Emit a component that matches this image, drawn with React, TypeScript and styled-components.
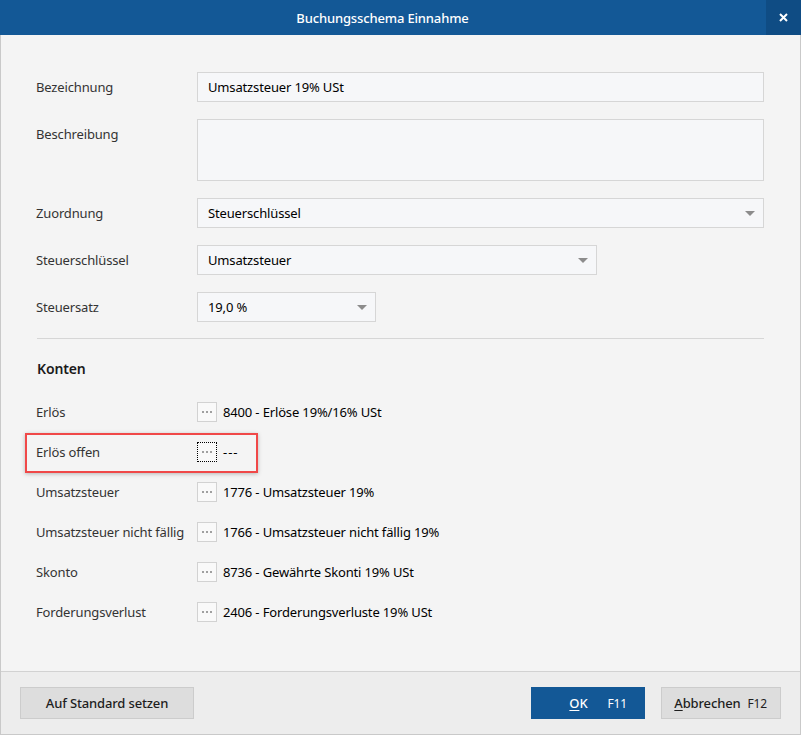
import React, { FC } from 'react';
import styled, { createGlobalStyle } from 'styled-components';

const GlobalStyle = createGlobalStyle`
  html, body {
    margin: 0;
    padding: 0;
    background: #ffffff;
  }
  body {
    font-family: 'Noto Sans', 'Open Sans', sans-serif;
    font-size: 13px;
    letter-spacing: -0.15px;
  }
`;

const Window = styled.div`
  width: 801px;
  height: 735px;
  display: flex;
  flex-direction: column;
  box-sizing: border-box;
  background: #f4f4f4;
`;

const TitleBar = styled.div`
  height: 35px;
  flex: 0 0 35px;
  background: #135896;
  display: flex;
  align-items: center;
  justify-content: center;
  position: relative;
`;

const Title = styled.div`
  color: #ffffff;
  font-size: 13px;
  font-weight: 500;
  margin-left: -36px;
`;

const CloseButton = styled.div`
  position: absolute;
  right: 0;
  top: 0;
  width: 35px;
  height: 35px;
  background: #0f4c84;
  display: flex;
  align-items: center;
  justify-content: center;
`;

const Frame = styled.div`
  flex: 1;
  display: flex;
  flex-direction: column;
  border-left: 1px solid #c9c9c9;
  border-right: 1px solid #c9c9c9;
  border-bottom: 1px solid #c9c9c9;
`;

const Body = styled.div`
  flex: 1;
  padding: 37px 36px 0 35px;
`;

const FormGrid = styled.div`
  display: grid;
  grid-template-columns: 161px 1fr;
  row-gap: 17px;
  align-items: start;
`;

const Label = styled.div`
  color: #333333;
  line-height: 30px;
  white-space: nowrap;
`;

const Field = styled.div<{ $width?: number; $height?: number }>`
  position: relative;
  box-sizing: border-box;
  width: ${p => (p.$width ? `${p.$width}px` : '100%')};
  height: ${p => p.$height ?? 30}px;
  border: 1px solid #d6d6d6;
  background: #f6f7f9;
  color: #000000;
  padding: 0 10px;
  line-height: 28px;
`;

const Caret = styled.span`
  position: absolute;
  right: 8px;
  top: 12px;
  width: 0;
  height: 0;
  border-left: 5px solid transparent;
  border-right: 5px solid transparent;
  border-top: 5px solid #8c8c8c;
`;

const Separator = styled.hr`
  border: none;
  height: 1px;
  background: #d6d6d6;
  margin: 16px 0 0 1px;
`;

const SectionTitle = styled.h3`
  margin: 20px 0 13px 1px;
  font-size: 14px;
  font-weight: 600;
  line-height: 20px;
  color: #1a1a1a;
`;

const AccountList = styled.div`
  display: flex;
  flex-direction: column;
`;

const AccountRow = styled.div`
  position: relative;
  display: grid;
  grid-template-columns: 161px 20px 1fr;
  align-items: center;
  height: 40px;
`;

const AccountLabel = styled.div`
  color: #333333;
  white-space: nowrap;
`;

const DotsButton = styled.div<{ $focused?: boolean }>`
  box-sizing: border-box;
  width: 20px;
  height: 20px;
  background: #f9f9f9;
  border: 1px ${p => (p.$focused ? 'dotted #000000' : 'solid #d2d2d2')};
  display: flex;
  align-items: center;
  justify-content: center;
`;

const AccountValue = styled.div<{ $empty?: boolean }>`
  color: #000000;
  white-space: nowrap;
  padding-left: 6px;
  letter-spacing: ${p => (p.$empty ? '1px' : 'inherit')};
`;

const Highlight = styled.div`
  position: absolute;
  left: -11px;
  top: 1px;
  width: 233px;
  height: 40px;
  box-sizing: border-box;
  border: 2px solid #f04848;
  box-shadow: 0 1px 4px rgba(0, 0, 0, 0.25);
  pointer-events: none;
`;

const Footer = styled.div`
  flex: 0 0 63px;
  box-sizing: border-box;
  border-top: 1px solid #d2d2d2;
  background: #ededed;
  display: flex;
  align-items: flex-start;
  padding: 15px 19px 0 19px;
`;

const Spacer = styled.div`
  flex: 1;
`;

const Button = styled.div<{ $primary?: boolean; $width: number; $align?: string; $pad?: number }>`
  box-sizing: border-box;
  width: ${p => p.$width}px;
  height: 32px;
  display: flex;
  align-items: center;
  justify-content: ${p => p.$align ?? 'center'};
  padding-right: ${p => p.$pad ?? 0}px;
  background: ${p => (p.$primary ? '#135896' : '#dddddd')};
  border: 1px solid ${p => (p.$primary ? '#135896' : '#cccccc')};
  color: ${p => (p.$primary ? '#ffffff' : '#1e1e1e')};
  font-size: 13px;
  font-weight: 500;
  & + & {
    margin-left: 16px;
  }
`;

const Shortcut = styled.span<{ $gap: number }>`
  margin-left: ${p => p.$gap}px;
  font-size: 12px;
  font-weight: 400;
`;

const Mnemonic = styled.span`
  text-decoration: underline;
  text-underline-offset: 2px;
`;

const Dots: FC = () => (
  <svg width="10" height="2" viewBox="0 0 10 2">
    <rect x="0" y="0" width="2" height="2" fill="#a0a0a0" />
    <rect x="4" y="0" width="2" height="2" fill="#a0a0a0" />
    <rect x="8" y="0" width="2" height="2" fill="#a0a0a0" />
  </svg>
);

const accounts = [
  { label: 'Erlös', value: '8400 - Erlöse 19%/16% USt' },
  { label: 'Erlös offen', value: '---', focused: true },
  { label: 'Umsatzsteuer', value: '1776 - Umsatzsteuer 19%' },
  { label: 'Umsatzsteuer nicht fällig', value: '1766 - Umsatzsteuer nicht fällig 19%' },
  { label: 'Skonto', value: '8736 - Gewährte Skonti 19% USt' },
  { label: 'Forderungsverlust', value: '2406 - Forderungsverluste 19% USt' },
];

const App: FC = () => {
  return (
    <>
      <GlobalStyle />
      <Window>
        <TitleBar>
          <Title>Buchungsschema Einnahme</Title>
          <CloseButton>
            <svg width="9" height="9" viewBox="0 0 9 9">
              <path d="M1 1 L8 8 M8 1 L1 8" stroke="#ffffff" strokeWidth="2" />
            </svg>
          </CloseButton>
        </TitleBar>
        <Frame>
          <Body>
            <FormGrid>
              <Label>Bezeichnung</Label>
              <Field>Umsatzsteuer 19% USt</Field>

              <Label>Beschreibung</Label>
              <Field $height={62} />

              <Label>Zuordnung</Label>
              <Field>
                Steuerschlüssel
                <Caret />
              </Field>

              <Label>Steuerschlüssel</Label>
              <Field $width={400}>
                Umsatzsteuer
                <Caret />
              </Field>

              <Label>Steuersatz</Label>
              <Field $width={179}>
                19,0 %
                <Caret />
              </Field>
            </FormGrid>

            <Separator />
            <SectionTitle>Konten</SectionTitle>

            <AccountList>
              {accounts.map(a => (
                <AccountRow key={a.label}>
                  <AccountLabel>{a.label}</AccountLabel>
                  <DotsButton $focused={a.focused}>
                    <Dots />
                  </DotsButton>
                  <AccountValue $empty={a.value === '---'}>{a.value}</AccountValue>
                  {a.focused && <Highlight />}
                </AccountRow>
              ))}
            </AccountList>
          </Body>

          <Footer>
            <Button $width={174}>Auf Standard setzen</Button>
            <Spacer />
            <Button $primary $width={114} $align="flex-end" $pad={17}>
              <span>
                <Mnemonic>O</Mnemonic>K
              </span>
              <Shortcut $gap={20}>F11</Shortcut>
            </Button>
            <Button $width={120} $align="flex-end" $pad={13}>
              <span>
                <Mnemonic>A</Mnemonic>bbrechen
              </span>
              <Shortcut $gap={7}>F12</Shortcut>
            </Button>
          </Footer>
        </Frame>
      </Window>
    </>
  );
};

export default App;
